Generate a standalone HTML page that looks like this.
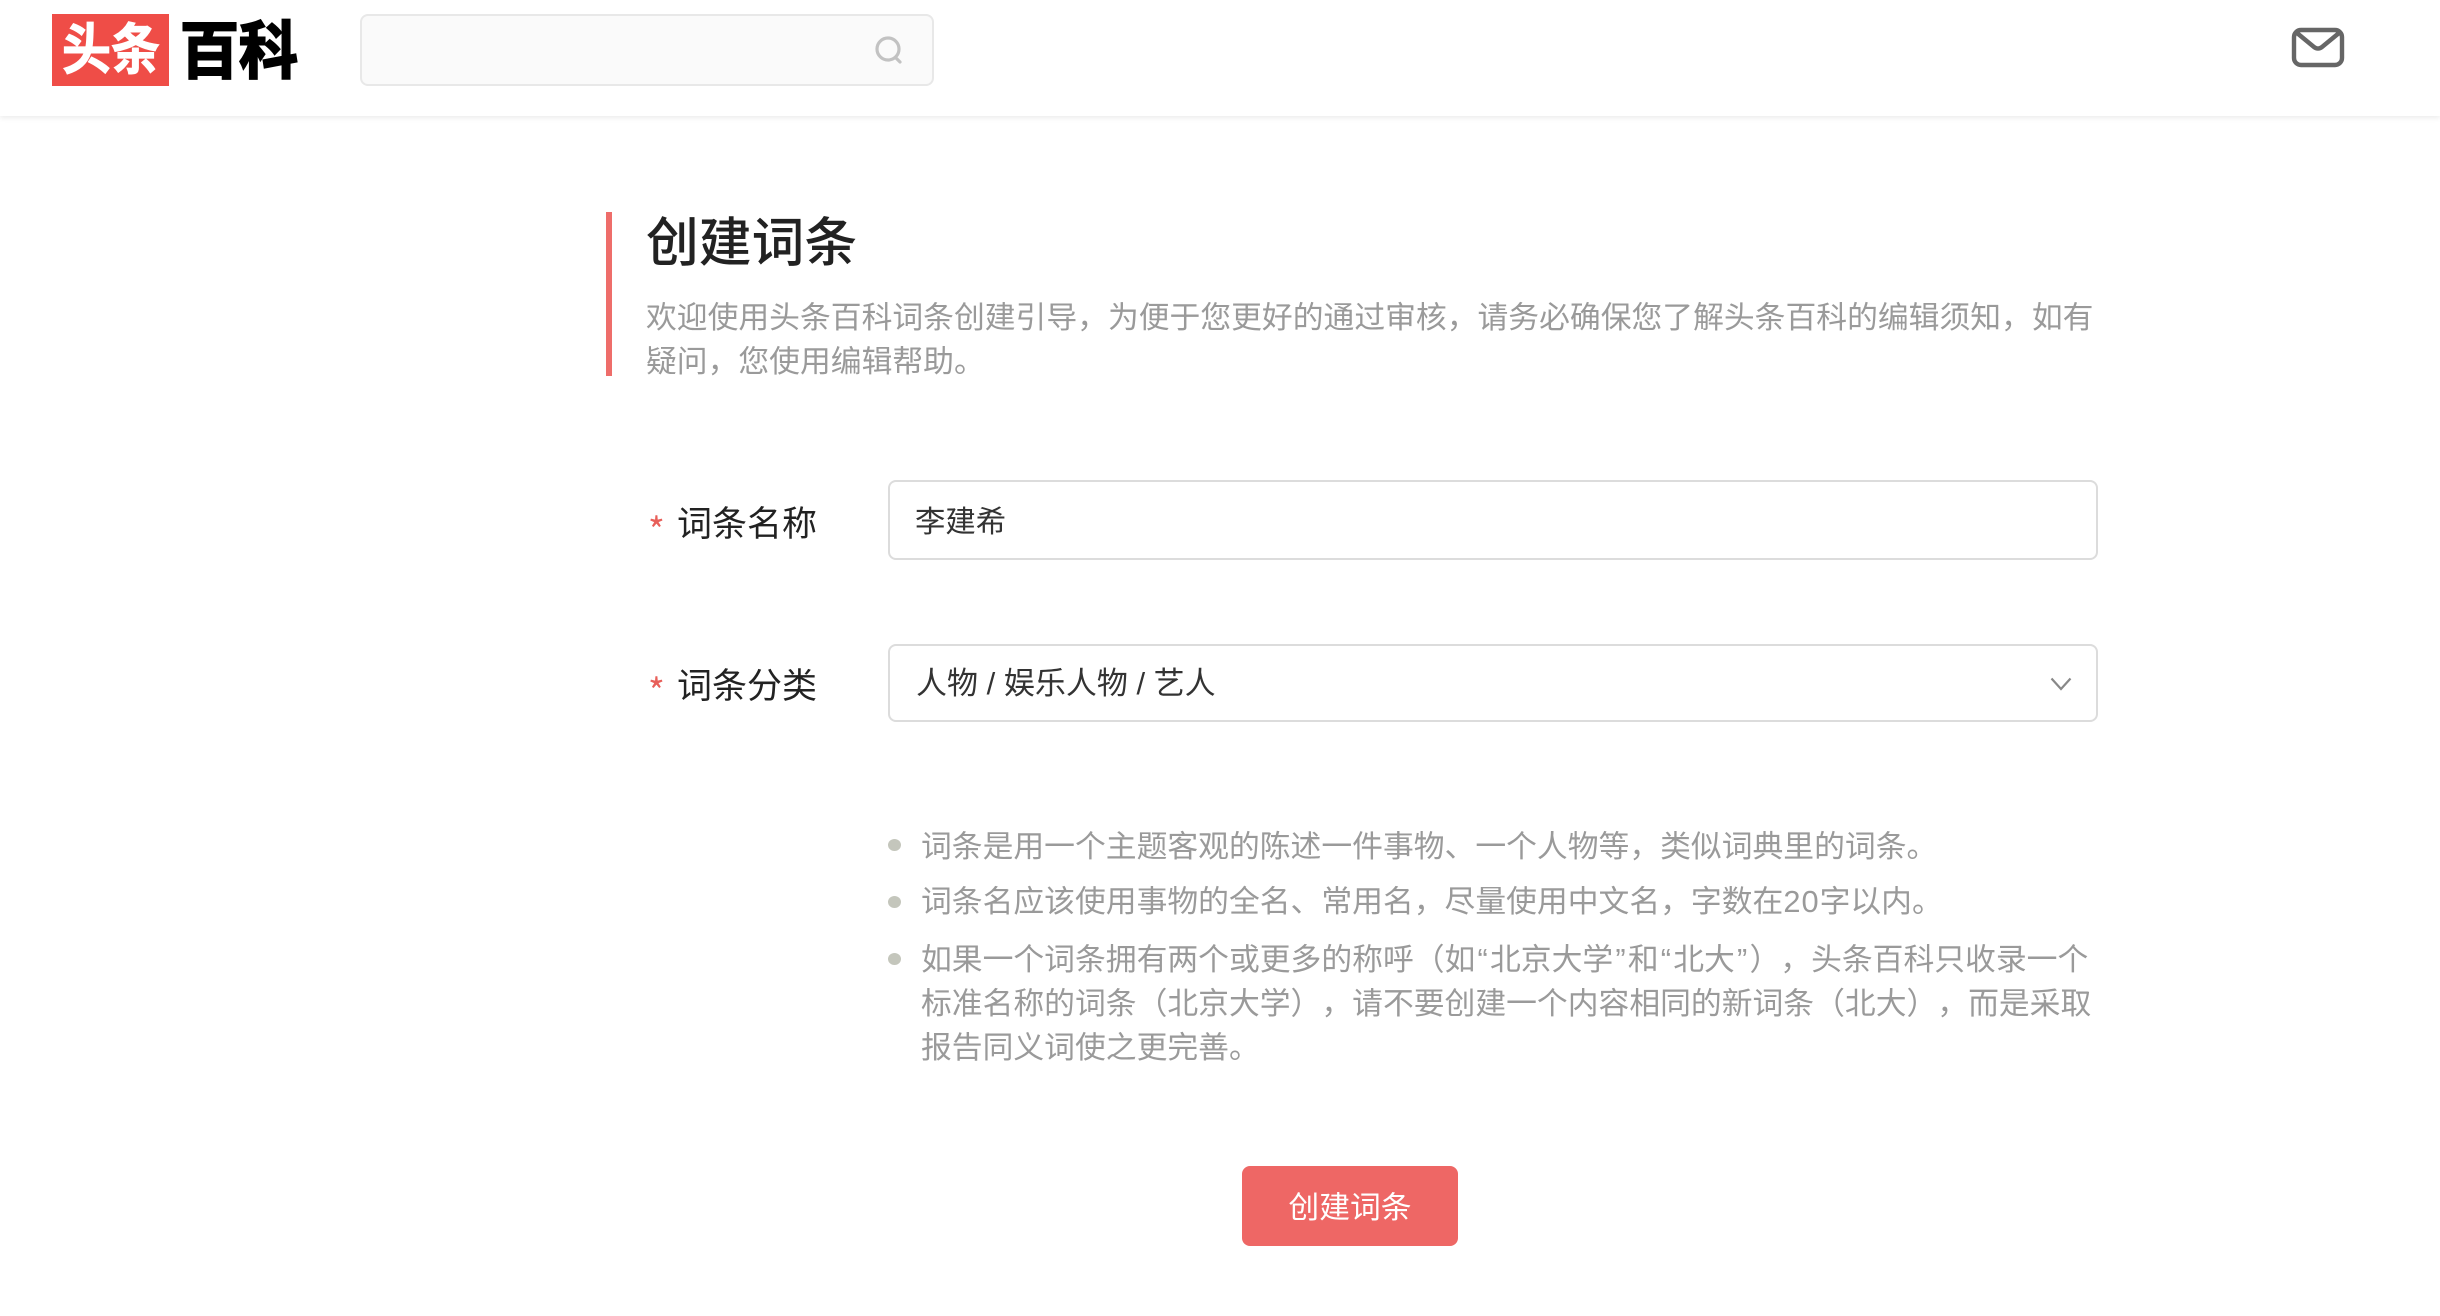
<!DOCTYPE html>
<html lang="zh-CN">
<head>
<meta charset="utf-8">
<title>创建词条</title>
<style>
html,body{margin:0;padding:0;background:#fff;}
body{position:relative;width:2440px;height:1316px;overflow:hidden;font-family:"Liberation Sans","Noto Sans CJK SC",sans-serif;text-spacing-trim:space-all;}
.a{position:absolute;white-space:nowrap;}
.t{line-height:44px;font-size:30.8px;color:#9a9a9a;}
.t i{font-style:normal;padding:0 2.2px;}
.b{position:absolute;width:13px;height:12px;border-radius:50%;background:#c4c6bc;left:887.500px;}
.box{position:absolute;box-sizing:border-box;left:888px;width:1210px;border:2px solid #dcdcdc;border-radius:8px;background:#fff;}
.s{font-family:"Noto Sans CJK SC",sans-serif;font-size:36px;line-height:40px;color:#e8605a;}
</style>
</head>
<body>
<div class="a" style="left:0;top:0;width:2440px;height:116px;background:#fff;box-shadow:0 2px 5px rgba(0,0,0,.08);"></div>

<div class="a" style="left:52px;top:14px;width:117px;height:72px;background:#ef4d47;"></div>
<div class="a" style="left:62px;top:15px;width:104px;height:72px;line-height:72px;font-size:49px;font-weight:700;color:#fff;-webkit-text-stroke:1px #fff;transform:scaleY(1.12);transform-origin:50% 50%;">头条</div>
<div class="a" style="left:180px;top:16px;height:72px;line-height:72px;font-size:59px;font-weight:700;color:#000;-webkit-text-stroke:2px #000;transform:scaleY(1.06);transform-origin:50% 50%;">百科</div>

<div class="a" style="box-sizing:border-box;left:360px;top:14px;width:574px;height:72px;background:#fafafa;border:2px solid #e8e8e8;border-radius:8px;"></div>
<svg class="a" style="left:874px;top:35px;" width="30" height="30" viewBox="0 0 30 30" fill="none" stroke="#c2c2c2" stroke-width="3.200" stroke-linecap="round"><circle cx="14" cy="14" r="11"/><path d="M22 23l4 4"/></svg>

<svg class="a" style="left:2290px;top:26px;" width="56" height="43" viewBox="0 0 56 43" fill="none" stroke="#666" stroke-width="4.400" stroke-linecap="round" stroke-linejoin="round"><rect x="4" y="4" width="48" height="35" rx="7"/><path d="M7 7l17 14c2.500 2 5.500 2 8 0L49 7"/></svg>

<div class="a" style="left:606px;top:212px;width:6px;height:164px;background:#ee6d6a;"></div>
<div class="a" style="left:646px;top:211.500px;line-height:64px;font-size:52.800px;font-weight:500;color:#222;">创建词条</div>
<div class="a t" style="left:646px;top:296px;">欢迎使用头条百科词条创建引导，为便于您更好的通过审核，请务必确保您了解头条百科的编辑须知，如有</div>
<div class="a t" style="left:646px;top:340px;">疑问，您使用编辑帮助。</div>

<div class="a s" style="left:648px;top:509px;">*</div>
<div class="a" style="left:677px;top:500px;line-height:50px;font-size:35px;color:#222;">词条名称</div>
<div class="box" style="top:480px;height:80px;"></div>
<div class="a" style="left:915px;top:497px;line-height:50px;font-size:30.400px;color:#333;">李建希</div>

<div class="a s" style="left:648px;top:670px;">*</div>
<div class="a" style="left:677px;top:661.500px;line-height:50px;font-size:35px;color:#222;">词条分类</div>
<div class="box" style="top:644px;height:78px;"></div>
<div class="a" style="left:916px;top:659px;line-height:50px;font-size:31px;color:#333;">人物 / 娱乐人物 / 艺人</div>
<svg class="a" style="left:2049px;top:676px;" width="24" height="16" viewBox="0 0 24 16" fill="none" stroke="#888" stroke-width="2.200"><path d="M2.500 2.500L12 13l9.500-10.500"/></svg>

<div class="b" style="top:839px;"></div>
<div class="a t" style="left:921px;top:824.500px;">词条是用一个主题客观的陈述一件事物、一个人物等，类似词典里的词条。</div>
<div class="b" style="top:896px;"></div>
<div class="a t" style="left:921px;top:880px;">词条名应该使用事物的全名、常用名，尽量使用中文名，字数在<span style="letter-spacing:1px">20</span>字以内。</div>
<div class="b" style="top:953px;"></div>
<div class="a t" style="left:921px;top:938px;">如果一个词条拥有两个或更多的称呼（如<i>“</i>北京大学<i>”</i>和<i>“</i>北大<i>”</i>），头条百科只收录一个</div>
<div class="a t" style="left:921px;top:982px;">标准名称的词条（北京大学），请不要创建一个内容相同的新词条（北大），而是采取</div>
<div class="a t" style="left:921px;top:1025.500px;">报告同义词使之更完善。</div>

<div class="a" style="left:1242px;top:1166px;width:216px;height:80px;background:#ee6765;border-radius:8px;"></div>
<div class="a" style="left:1242px;top:1183px;width:216px;text-align:center;line-height:50px;font-size:30.800px;color:#fff;">创建词条</div>
</body>
</html>
